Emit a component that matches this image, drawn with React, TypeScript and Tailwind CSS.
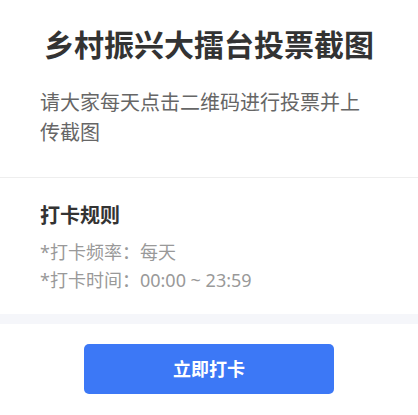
export default function App() {
  return (
    <div
      className="w-[418px] min-h-[415px] bg-white text-[#333]"
      style={{ fontFamily: '"Noto Sans", "Noto Sans CJK SC", sans-serif' }}
    >
      {/* Header */}
      <div className="px-10 pt-[25px] pb-[29px] border-b border-[#eeeeee]">
        <h1 className="text-center text-[30px] leading-[40px] font-bold text-[#333]">
          乡村振兴大擂台投票截图
        </h1>
        <p className="mt-[23px] text-[20px] leading-[30px] text-[#666]">
          请大家每天点击二维码进行投票并上传截图
        </p>
      </div>

      {/* Rules */}
      <div className="px-10 pt-[24px] pb-[20px]">
        <h2 className="text-[20px] leading-[28px] font-bold text-[#333]">打卡规则</h2>
        <div className="mt-[8px] text-[18px] leading-[28px] text-[#999]">
          <p>*打卡频率：每天</p>
          <p>*打卡时间：00:00 ~ 23:59</p>
        </div>
      </div>

      <div className="h-[10px] bg-[#f5f6fa]" />

      {/* Action */}
      <div className="flex justify-center pt-5 pb-5">
        <button className="w-[250px] h-[50px] rounded-[5px] bg-[#3c78f6] text-white text-[18px] font-bold">
          立即打卡
        </button>
      </div>
    </div>
  )
}
